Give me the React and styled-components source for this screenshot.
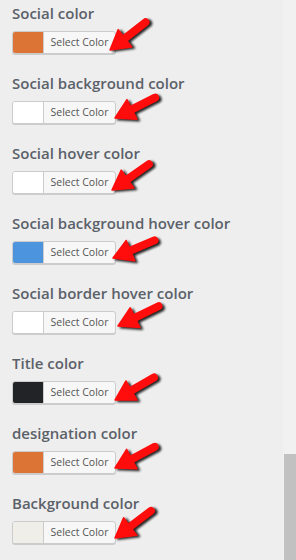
import styled, { createGlobalStyle } from "styled-components";

const GlobalStyle = createGlobalStyle`
  html, body {
    margin: 0;
    padding: 0;
    background: #eeeeee;
  }
  body {
    font-family: "Open Sans", "Liberation Sans", sans-serif;
    overflow: hidden;
  }
`;

const Page = styled.div`
  display: flex;
  height: 560px;
  background: #eeeeee;
`;

const Panel = styled.div`
  flex: 1;
  padding: 3px 0 0 12px;
`;

const Field = styled.div`
  position: relative;
  margin-bottom: 19px;
`;

const Label = styled.div`
  font-size: 15px;
  line-height: 21px;
  font-weight: 600;
  color: #5b6169;
  margin-bottom: 7px;
  white-space: nowrap;
`;

const ColorButton = styled.button`
  display: flex;
  align-items: stretch;
  width: 104px;
  height: 23px;
  padding: 0;
  border: 1px solid #cccccc;
  border-radius: 3px;
  background: #f7f7f7;
  box-shadow: 0 1px 0 #cccccc;
  overflow: hidden;
  cursor: pointer;
`;

const Swatch = styled.span`
  width: 30px;
  flex: none;
  background: ${(p) => p.$color};
  border-right: 1px solid #cccccc;
`;

const ButtonText = styled.span`
  flex: 1;
  font-family: "Open Sans", "Liberation Sans", sans-serif;
  font-size: 10.5px;
  line-height: 21px;
  color: #555555;
  text-align: center;
  white-space: nowrap;
`;

/* the field box starts at x=12, y=3 of the page, so tips are shifted back */
const ArrowSvg = styled.svg`
  position: absolute;
  left: ${(p) => p.$x - 12 - 6}px;
  top: ${(p) => p.$y - 3 - 50}px;
  overflow: visible;
  pointer-events: none;
`;

const ScrollTrack = styled.div`
  width: 13px;
  display: flex;
  flex-direction: column;
  justify-content: flex-end;
  background: #f1f1f1;
`;

const ScrollThumb = styled.div`
  height: 106px;
  margin-left: 1px;
  background: #c1c1c1;
`;

const fields = [
  { label: "Social color", color: "#dc7436", tip: [110, 50], angle: 38 },
  { label: "Social background color", color: "#ffffff", tip: [115, 48], angle: 27 },
  { label: "Social hover color", color: "#ffffff", tip: [112, 50], angle: 35 },
  { label: "Social background hover color", color: "#4d94de", tip: [113, 48], angle: 23 },
  { label: "Social border hover color", color: "#ffffff", tip: [118, 46], angle: 26 },
  { label: "Title color", color: "#222326", tip: [115, 50], angle: 30 },
  { label: "designation color", color: "#dc7436", tip: [115, 48], angle: 28 },
  { label: "Background color", color: "#efeee9", tip: [115, 48], angle: 37 },
];

const ArrowShape = ({ fill, stroke }) => (
  <>
    <line x1="20" y1="50" x2="51" y2="50" stroke={stroke} strokeWidth="8" strokeLinecap="round" />
    <polygon points="6,50 25,39 25,61" fill={fill} stroke={fill} strokeWidth="1.5" strokeLinejoin="round" />
  </>
);

const Arrow = ({ tip, angle, id }) => (
  <ArrowSvg $x={tip[0]} $y={tip[1]} width="64" height="56">
    <defs>
      <filter id={id} x="-30%" y="-30%" width="160%" height="160%">
        <feGaussianBlur stdDeviation="1.2" />
      </filter>
    </defs>
    <g transform={`rotate(${-angle} 6 50)`}>
      <g transform="translate(1.5 2.5)" filter={`url(#${id})`} opacity="0.85">
        <ArrowShape fill="#000" stroke="#000" />
      </g>
      <ArrowShape fill="#ff0c0c" stroke="#ff0c0c" />
    </g>
  </ArrowSvg>
);

export default function App() {
  return (
    <>
      <GlobalStyle />
      <Page>
        <Panel>
          {fields.map((f, i) => (
            <Field key={f.label}>
              <Label>{f.label}</Label>
              <ColorButton type="button">
                <Swatch $color={f.color} />
                <ButtonText>Select Color</ButtonText>
              </ColorButton>
              <Arrow tip={f.tip} angle={f.angle} id={`shadow-${i}`} />
            </Field>
          ))}
        </Panel>
        <ScrollTrack>
          <ScrollThumb />
        </ScrollTrack>
      </Page>
    </>
  );
}
